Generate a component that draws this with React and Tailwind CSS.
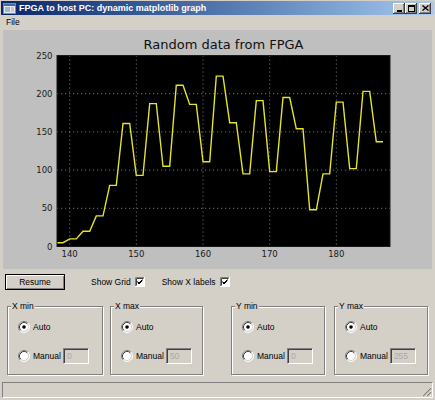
import React, { useState } from "react";

const data = [5, 10, 20, 40, 80, 161, 93, 187, 105, 211, 186, 111, 223, 162, 95, 191, 98, 195, 154, 48, 95, 189, 102, 203, 137];

// plot frame inside the canvas (canvas pixels)
const PL = 54;
const PR = 387;
const PT = 25.5;
const PB = 216.5;
const X0 = 138.1;
const X1 = 188.05;

const sx = (v) => PL + ((v - X0) * (PR - PL)) / (X1 - X0);
const sy = (v) => PB - (v * (PB - PT)) / 250;

const Chart = ({ grid }) => {
  const pts = [];
  data.forEach((v, i) => {
    pts.push(`${sx(138 + 2 * i).toFixed(1)},${sy(v).toFixed(1)}`);
    pts.push(`${sx(139 + 2 * i).toFixed(1)},${sy(v).toFixed(1)}`);
  });
  const xt = [140, 150, 160, 170, 180];
  const yt = [0, 50, 100, 150, 200, 250];

  return (
    <svg width="429" height="239" viewBox="0 0 429 239" className="block">
      <defs>
        <clipPath id="plotclip">
          <rect x={PL} y={PT} width={PR - PL} height={PB - PT} />
        </clipPath>
      </defs>
      <text x={(PL + PR) / 2} y="18.5" textAnchor="middle" fontFamily="DejaVu Sans, sans-serif" fontSize="13" fill="#111">
        Random data from FPGA
      </text>
      <rect x={PL} y={PT} width={PR - PL} height={PB - PT} fill="#000" />
      {grid && (
        <g stroke="#8a8a8a" strokeWidth="0.8" strokeDasharray="1.2 2.8">
          {xt.map((t) => (
            <line key={t} x1={sx(t)} x2={sx(t)} y1={PT} y2={PB} />
          ))}
          {yt.slice(1, 5).map((t) => (
            <line key={t} x1={PL} x2={PR} y1={sy(t)} y2={sy(t)} />
          ))}
        </g>
      )}
      <polyline points={pts.join(" ")} fill="none" stroke="#e4e42c" strokeWidth="1.4" strokeLinejoin="miter" clipPath="url(#plotclip)" />
      <rect x={PL} y={PT} width={PR - PL} height={PB - PT} fill="none" stroke="#1a1a1a" strokeWidth="1" />
      <g fontFamily="DejaVu Sans, sans-serif" fontSize="8.5" fill="#1a1a1a">
        {yt.map((t) => (
          <text key={t} x={PL - 4.5} y={sy(t) + 3} textAnchor="end">
            {t}
          </text>
        ))}
        {xt.map((t) => (
          <text key={t} x={sx(t)} y="227.3" textAnchor="middle">
            {t}
          </text>
        ))}
      </g>
    </svg>
  );
};

const Radio = ({ checked }) => (
  <svg width="12" height="12" viewBox="0 0 12 12" className="shrink-0">
    <circle cx="6" cy="6" r="5" fill="#fff" />
    <path d="M2.11 9.89 A5.5 5.5 0 0 1 9.89 2.11" fill="none" stroke="#808080" strokeWidth="1" />
    <path d="M9.89 2.11 A5.5 5.5 0 0 1 2.11 9.89" fill="none" stroke="#fff" strokeWidth="1" />
    <path d="M2.82 9.18 A4.5 4.5 0 0 1 9.18 2.82" fill="none" stroke="#404040" strokeWidth="1" />
    <path d="M9.18 2.82 A4.5 4.5 0 0 1 2.82 9.18" fill="none" stroke="#d4d0c8" strokeWidth="1" />
    {checked && <circle cx="6" cy="6" r="1.8" fill="#000" />}
  </svg>
);

const Check = ({ checked, onClick }) => (
  <svg width="10" height="10" viewBox="0 0 10 10" className="shrink-0" onClick={onClick}>
    <rect x="0" y="0" width="10" height="10" fill="#fff" />
    <path d="M0.5 9.5 V0.5 H9.5" fill="none" stroke="#808080" />
    <path d="M1.5 8.5 V1.5 H8.5" fill="none" stroke="#404040" />
    <path d="M0 9.5 H9.5 V0" fill="none" stroke="#fff" />
    {checked && <path d="M2.5 4.5 L4 6 L7.5 2.5 M2.5 5.5 L4 7 L7.5 3.5" fill="none" stroke="#000" strokeWidth="1" />}
  </svg>
);

const Group = ({ title, value, className }) => (
  <div className={`h-[69px] border border-[#808080] shadow-[inset_1px_1px_0_#fff,1px_1px_0_#fff] ${className}`}>
    <div className="-mt-[6px] ml-[3px] w-fit bg-[#d4d0c8] px-[1px] leading-[10px]">{title}</div>
    <div className="mt-[10px] ml-[10px] flex h-[12px] items-center gap-[2px]">
      <Radio checked />
      <span className="ml-[1px]">Auto</span>
    </div>
    <div className="mt-[15px] ml-[10px] flex h-[16px] items-center">
      <Radio />
      <span className="ml-[3px]">Manual</span>
      <div className="ml-[2px] flex h-[16px] w-[26px] items-center border border-t-[#808080] border-l-[#808080] border-b-white border-r-white pl-[3px] text-[#a8a8a8] shadow-[inset_1px_1px_0_#404040,inset_-1px_-1px_0_#d4d0c8]">
        {value}
      </div>
    </div>
  </div>
);

const TitleBtn = ({ children, className = "" }) => (
  <div className={`flex h-[11px] w-[12px] items-center justify-center bg-[#d4d0c8] shadow-[inset_-1px_-1px_0_#404040,inset_1px_1px_0_#fff,inset_-2px_-2px_0_#808080] ${className}`}>
    {children}
  </div>
);

export default function App() {
  const [grid, setGrid] = useState(true);
  const [xlabels, setXlabels] = useState(true);

  return (
    <div className="flex h-[400px] w-[435px] flex-col overflow-hidden bg-[#d4d0c8] font-['Liberation_Sans',Arial,sans-serif] text-[8.5px] text-black">
      {/* title bar */}
      <div className="mx-[1px] mt-[1px] flex h-[14px] items-center bg-gradient-to-r from-[#0a246a] to-[#a6caf0] pl-[2px] pr-[3px]">
        <svg width="13" height="11" viewBox="0 0 13 11" className="shrink-0">
          <rect x="0.5" y="0.5" width="12" height="10" fill="#e8e8e8" stroke="#7a8aa8" />
          <rect x="1" y="1" width="11" height="2" fill="#3a6ea5" />
          <rect x="2" y="4" width="5" height="5" fill="#9fb7d6" />
          <rect x="8" y="4" width="3" height="5" fill="#c8c8c8" />
        </svg>
        <span className="ml-[3px] text-[9px] font-bold leading-none text-white">FPGA to host PC: dynamic matplotlib graph</span>
        <div className="ml-auto flex items-center">
          <TitleBtn>
            <div className="mt-[5px] h-[2px] w-[5px] bg-black" />
          </TitleBtn>
          <TitleBtn>
            <div className="h-[7px] w-[7px] border border-t-2 border-black" />
          </TitleBtn>
          <TitleBtn className="ml-[2px]">
            <svg width="7" height="6" viewBox="0 0 7 6">
              <path d="M0.5 0.5 L6.5 5.5 M6.5 0.5 L0.5 5.5" stroke="#000" strokeWidth="1.4" />
            </svg>
          </TitleBtn>
        </div>
      </div>

      {/* menu */}
      <div className="flex h-[15px] items-center pl-[6px]">File</div>

      {/* figure canvas */}
      <div className="mx-[3px] h-[239px] bg-[#bfbfbf]">
        <Chart grid={grid} />
      </div>

      {/* controls row */}
      <div className="mt-[5px] flex h-[16px] items-center">
        <button className="ml-[5px] h-[16px] w-[60px] border border-black bg-[#d4d0c8] shadow-[inset_1px_1px_0_#fff,inset_-1px_-1px_0_#808080]">
          Resume
        </button>
        <span className="ml-[26px]">Show Grid</span>
        <span className="ml-[4px]">
          <Check checked={grid} onClick={() => setGrid(!grid)} />
        </span>
        <span className="ml-[17px]">Show X labels</span>
        <span className="ml-[4px]">
          <Check checked={xlabels} onClick={() => setXlabels(!xlabels)} />
        </span>
      </div>

      {/* axis limit groups */}
      <div className="mt-[16px] flex">
        <Group title="X min" value="0" className="ml-[7px] w-[96px]" />
        <Group title="X max" value="50" className="ml-[7px] w-[93px]" />
        <Group title="Y min" value="0" className="ml-[28px] w-[94px]" />
        <Group title="Y max" value="255" className="ml-[9px] w-[94px]" />
      </div>

      {/* status bar */}
      <div className="mx-[2px] mt-[7px] flex h-[16px] justify-end border border-t-[#808080] border-l-[#808080] border-b-white border-r-white">
        <svg width="12" height="12" viewBox="0 0 12 12" className="mt-auto">
          <path d="M11 2 L2 11 M11 6 L6 11 M11 10 L10 11" stroke="#fff" strokeWidth="1" />
          <path d="M11 3 L3 11 M11 7 L7 11" stroke="#808080" strokeWidth="1.2" />
        </svg>
      </div>
    </div>
  );
}
